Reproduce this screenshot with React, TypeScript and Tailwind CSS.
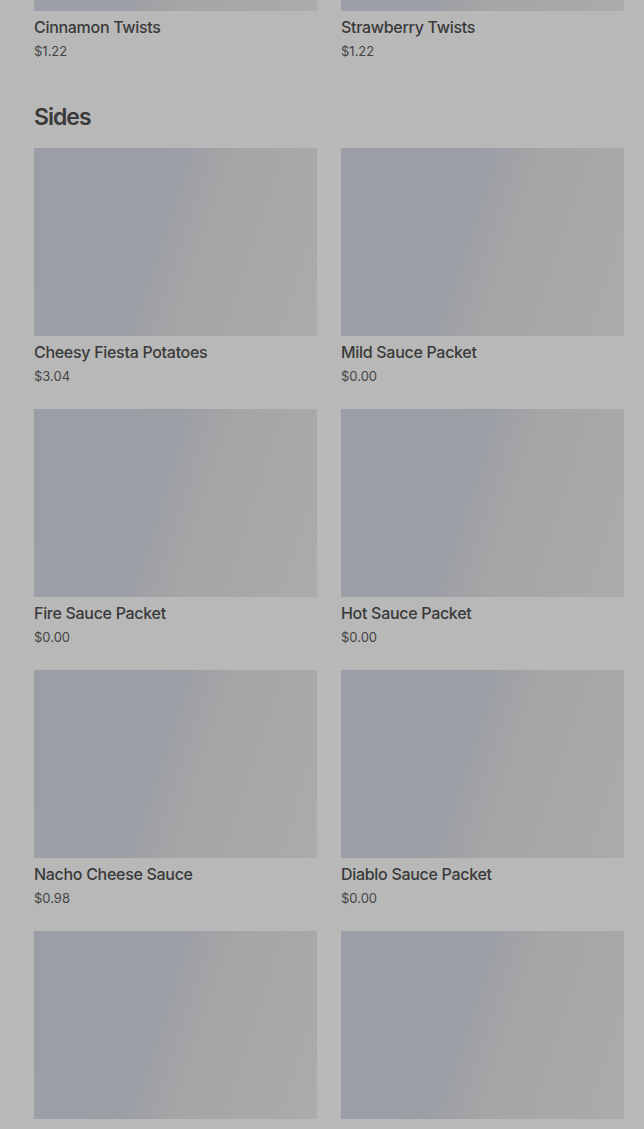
const sides = [
  { name: "Cheesy Fiesta Potatoes", price: "$3.04" },
  { name: "Mild Sauce Packet", price: "$0.00" },
  { name: "Fire Sauce Packet", price: "$0.00" },
  { name: "Hot Sauce Packet", price: "$0.00" },
  { name: "Nacho Cheese Sauce", price: "$0.98" },
  { name: "Diablo Sauce Packet", price: "$0.00" },
  { name: "Chips and Nacho Cheese Sauce", price: "$1.99" },
  { name: "Guacamole", price: "$0.80" },
]

function Card({ name, price }: { name: string; price: string }) {
  return (
    <div className="flex flex-col">
      <div className="h-[188px] w-full bg-[linear-gradient(108deg,#9b9ea6_0%,#9c9fa6_44%,#a5a5a6_58%,#ababab_100%)]" />
      <p className="mt-[6px] text-[16px] leading-[20px] font-medium tracking-[-0.3px] text-[#3a3a3a]">{name}</p>
      <p className="mt-[4px] text-[13px] leading-[20px] text-[#454545]">{price}</p>
    </div>
  )
}

export default function App() {
  return (
    <div
      className="min-h-screen bg-[#b8b8b8] pl-[34px] pr-[20px] overflow-hidden"
      style={{ fontFamily: "Inter, 'Liberation Sans', sans-serif" }}
    >
      <div className="-mt-[177px] grid grid-cols-2 gap-x-[24px]">
        <Card name="Cinnamon Twists" price="$1.22" />
        <Card name="Strawberry Twists" price="$1.22" />
      </div>
      <h2 className="mt-[42px] text-[23px] leading-[28px] font-semibold tracking-[-1px] text-[#3a3a3a]">Sides</h2>
      <div className="mt-[17px] grid grid-cols-2 gap-x-[24px] gap-y-[23px]">
        {sides.map((s) => (
          <Card key={s.name} name={s.name} price={s.price} />
        ))}
      </div>
    </div>
  )
}
